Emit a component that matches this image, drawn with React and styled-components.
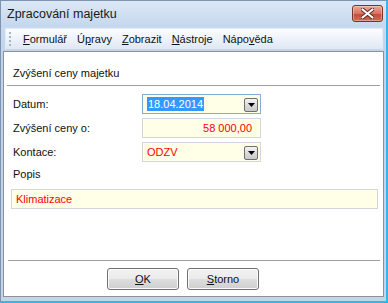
import React from "react";
import styled, { createGlobalStyle } from "styled-components";

const Global = createGlobalStyle`
  html, body { margin: 0; padding: 0; background: #fff; }
  body { font-family: "Liberation Sans", Arial, sans-serif; }
`;

const Window = styled.div`
  width: 388px;
  height: 303px;
  box-sizing: border-box;
  display: flex;
  flex-direction: column;
  background: linear-gradient(#cfdff2, #bfd3ec 60px, #c3d5ed);
  border-left: 1px solid #7e93b0;
  border-top: 1px solid #7e93b0;
  border-right: 2px solid #35b6e6;
  border-bottom: 2px solid #35b6e6;
  overflow: hidden;
`;

const TitleBar = styled.div`
  height: 26px;
  display: flex;
  justify-content: space-between;
  align-items: flex-start;
  padding: 0 3px 0 6px;
  background: linear-gradient(#dce8f6, #c4d7ee);
`;

const Title = styled.div`
  font-size: 12.5px;
  line-height: 12px;
  padding-top: 7px;
  color: #1a1a1a;
`;

const CloseBtn = styled.div`
  width: 29px;
  height: 15px;
  margin-top: 4px;
  border: 1px solid #7a3328;
  border-radius: 3px;
  background: linear-gradient(#eaa896, #d8735f 50%, #c34b35 51%, #d06a52);
  box-shadow: inset 0 0 0 1px rgba(255, 255, 255, 0.35);
  display: flex;
  align-items: center;
  justify-content: center;
`;

const MenuBar = styled.div`
  height: 20px;
  margin: 1px 3px 0 4px;
  display: flex;
  align-items: center;
  background: linear-gradient(#fbfcfe, #eef3fa 50%, #dfe7f4);
  border: 1px solid #e4ebf5;
  border-bottom-color: #c9d6e8;
`;

const Grip = styled.div`
  width: 2px;
  height: 14px;
  margin: 0 12px 0 3px;
  background: repeating-linear-gradient(#a7b5c8 0 2px, transparent 2px 4px);
`;

const MenuItem = styled.span`
  font-size: 11px;
  color: #111;
  margin-right: 10px;
`;

const Key = styled.u`
  text-decoration: underline;
  text-underline-offset: 1px;
`;

const Content = styled.div`
  flex: 1;
  margin: 1px 2px 4px 2px;
  display: flex;
  flex-direction: column;
  background: #fff;
  border: 1px solid #8d9096;
  font-size: 11px;
  color: #111;
`;

const Heading = styled.div`
  padding: 14px 0 4px 9px;
  line-height: 15px;
`;

const Rule = styled.div`
  height: 1px;
  margin: 0 ${(p) => p.$r || 3}px 0 ${(p) => p.$l || 3}px;
  background: #a0a0a0;
`;

const Form = styled.div`
  display: flex;
  flex-direction: column;
  gap: 4px;
  padding: 8px 0 0 9px;
`;

const Row = styled.div`
  display: flex;
  align-items: center;
  height: 20px;
`;

const Label = styled.div`
  width: 129px;
`;

const Field = styled.div`
  position: relative;
  width: 119px;
  height: 20px;
  box-sizing: border-box;
  display: flex;
  align-items: center;
  justify-content: ${(p) => (p.$right ? "flex-end" : "flex-start")};
  padding: 0 ${(p) => (p.$right ? 8 : 4)}px 0 4px;
  background: #fffee6;
  border: 1px solid ${(p) => (p.$focus ? "#86abd9" : "#d3d6da")};
  color: #ff0000;
`;

const Selected = styled.span`
  background: #3399ff;
  color: #fff;
  line-height: 14px;
  padding: 0 1px;
`;

const DropBtn = styled.div`
  position: absolute;
  right: 2px;
  top: 3px;
  width: 12px;
  height: 12px;
  border: 1px solid #6f6f6f;
  border-radius: 2px;
  background: linear-gradient(#f4f4f4, #dcdcdc 50%, #c9c9c9);
  display: flex;
  align-items: center;
  justify-content: center;
`;

const Popis = styled.div`
  padding: 5px 0 0 9px;
  line-height: 15px;
`;

const Memo = styled.div`
  height: 20px;
  margin: 7px 5px 0 7px;
  box-sizing: border-box;
  padding: 0 4px;
  display: flex;
  align-items: center;
  background: #fffee6;
  border: 1px solid #d3d6da;
  color: #ff0000;
`;

const Spacer = styled.div`
  flex: 1;
`;

const Buttons = styled.div`
  display: flex;
  gap: 8px;
  padding: 7px 0 6px 103px;
`;

const Button = styled.div`
  width: 72px;
  height: 22px;
  box-sizing: border-box;
  display: flex;
  align-items: center;
  justify-content: center;
  border: 1px solid #707070;
  border-radius: 3px;
  background: linear-gradient(#f2f2f2, #ebebeb 50%, #dddddd 51%, #cfcfcf);
  box-shadow: inset 0 0 0 1px #fcfcfc;
  font-size: 11px;
  color: #111;
`;

const Arrow = () => (
  <svg width="7" height="4" viewBox="0 0 7 4">
    <path d="M0 0h7L3.5 4z" fill="#000" />
  </svg>
);

export default function App() {
  return (
    <>
      <Global />
      <Window>
        <TitleBar>
          <Title>Zpracování majetku</Title>
          <CloseBtn>
            <svg width="13" height="11" viewBox="0 0 13 11">
              <path
                d="M1.5 1.5l10 8M11.5 1.5l-10 8"
                stroke="#5a2a22"
                strokeWidth="4"
                strokeLinecap="round"
              />
              <path
                d="M1.5 1.5l10 8M11.5 1.5l-10 8"
                stroke="#fff"
                strokeWidth="2.2"
                strokeLinecap="round"
              />
            </svg>
          </CloseBtn>
        </TitleBar>
        <MenuBar>
          <Grip />
          <MenuItem>
            <Key>F</Key>ormulář
          </MenuItem>
          <MenuItem>
            Ú<Key>p</Key>ravy
          </MenuItem>
          <MenuItem>
            <Key>Z</Key>obrazit
          </MenuItem>
          <MenuItem>
            <Key>N</Key>ástroje
          </MenuItem>
          <MenuItem>
            Nápo<Key>v</Key>ěda
          </MenuItem>
        </MenuBar>
        <Content>
          <Heading>Zvýšení ceny majetku</Heading>
          <Rule />
          <Form>
            <Row>
              <Label>Datum:</Label>
              <Field $focus>
                <Selected>18.04.2014</Selected>
                <DropBtn>
                  <Arrow />
                </DropBtn>
              </Field>
            </Row>
            <Row>
              <Label>Zvýšení ceny o:</Label>
              <Field $right>58 000,00</Field>
            </Row>
            <Row>
              <Label>Kontace:</Label>
              <Field>
                ODZV
                <DropBtn>
                  <Arrow />
                </DropBtn>
              </Field>
            </Row>
          </Form>
          <Popis>Popis</Popis>
          <Memo>Klimatizace</Memo>
          <Spacer />
          <Rule $l={4} $r={3} />
          <Buttons>
            <Button>
              <Key>O</Key>K
            </Button>
            <Button>
              <Key>S</Key>torno
            </Button>
          </Buttons>
        </Content>
      </Window>
    </>
  );
}
